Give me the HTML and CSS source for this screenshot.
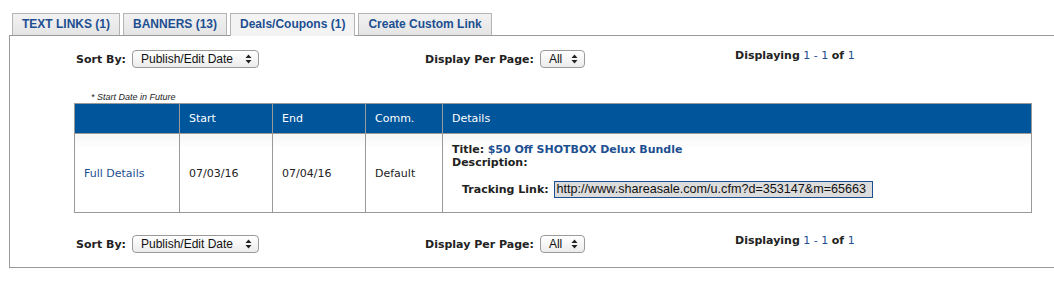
FILE: index.html
```html
<!DOCTYPE html>
<html lang="en">
<head>
    <meta charset="UTF-8">
    <title>Deals/Coupons</title>
    <link rel="stylesheet" href="styles.css">
</head>
<body>

<div class="tabs">
    <a class="tab">TEXT LINKS (1)</a>
    <a class="tab">BANNERS (13)</a>
    <a class="tab active">Deals/Coupons (1)</a>
    <a class="tab">Create Custom Link</a>
</div>

<div class="panel">
    <div class="controls">
        <div class="ctl">
            <span class="label">Sort By:</span>
            <span class="select sort-select">Publish/Edit Date
                <svg class="updown" width="7" height="10" viewBox="0 0 7 10"><path d="M3.5 0.5 L6.5 4 L0.5 4 Z M3.5 9.5 L6.5 6 L0.5 6 Z" fill="#222"/></svg>
            </span>
        </div>
        <div class="ctl">
            <span class="label">Display Per Page:</span>
            <span class="select page-select">All
                <svg class="updown" width="7" height="10" viewBox="0 0 7 10"><path d="M3.5 0.5 L6.5 4 L0.5 4 Z M3.5 9.5 L6.5 6 L0.5 6 Z" fill="#222"/></svg>
            </span>
        </div>
        <div class="count"><b>Displaying</b> <span class="num">1 - 1</span> <b>of</b> <span class="num">1</span></div>
    </div>

    <div class="note">* Start Date in Future</div>

    <table class="deals">
        <tr class="head">
            <th class="c1"></th>
            <th class="c2">Start</th>
            <th class="c3">End</th>
            <th class="c4">Comm.</th>
            <th>Details</th>
        </tr>
        <tr class="row">
            <td><a class="link">Full Details</a></td>
            <td>07/03/16</td>
            <td>07/04/16</td>
            <td>Default</td>
            <td class="details">
                <div><b>Title:</b> <b class="link">$50 Off SHOTBOX Delux Bundle</b></div>
                <div><b>Description:</b></div>
                <div class="track"><b>Tracking Link:</b> <span class="track-input">http://www.shareasale.com/u.cfm?d=353147&amp;m=65663</span></div>
            </td>
        </tr>
    </table>

    <div class="controls bottom">
        <div class="ctl">
            <span class="label">Sort By:</span>
            <span class="select sort-select">Publish/Edit Date
                <svg class="updown" width="7" height="10" viewBox="0 0 7 10"><path d="M3.5 0.5 L6.5 4 L0.5 4 Z M3.5 9.5 L6.5 6 L0.5 6 Z" fill="#222"/></svg>
            </span>
        </div>
        <div class="ctl">
            <span class="label">Display Per Page:</span>
            <span class="select page-select">All
                <svg class="updown" width="7" height="10" viewBox="0 0 7 10"><path d="M3.5 0.5 L6.5 4 L0.5 4 Z M3.5 9.5 L6.5 6 L0.5 6 Z" fill="#222"/></svg>
            </span>
        </div>
        <div class="count"><b>Displaying</b> <span class="num">1 - 1</span> <b>of</b> <span class="num">1</span></div>
    </div>
</div>

</body>
</html>
```

FILE: styles.css
```css
body {
    margin: 0;
    font-family: Verdana, "DejaVu Sans", sans-serif;
    font-size: 11px;
    color: #222;
    background: #fff;
}

/* Tabs */
.tabs {
    display: flex;
    gap: 3px;
    padding: 13px 0 0 12px;
    position: relative;
    z-index: 1;
}

.tab {
    height: 22px;
    line-height: 21px;
    padding: 0 9px;
    border: 1px solid #b4b4b4;
    border-bottom: none;
    box-sizing: border-box;
    background: linear-gradient(#f2f2f2, #e4e4e4);
    font-family: "Liberation Sans", Arial, sans-serif;
    font-weight: bold;
    font-size: 12px;
    color: #1d4f91;
}

.tab.active {
    background: #f3f3f3;
    height: 23px;
    margin-bottom: -1px;
}

/* Panel */
.panel {
    margin-left: 9px;
    border: 1px solid #999;
    border-right: none;
    height: 233px;
    box-sizing: border-box;
}

.controls {
    display: grid;
    grid-template-columns: 349px 310px 1fr;
    padding: 14px 0 0 66px;
    align-items: start;
}

.controls.bottom {
    padding-top: 22px;
}

.ctl {
    display: flex;
    align-items: center;
    gap: 6px;
}

.label {
    font-weight: bold;
}

.select {
    display: inline-flex;
    align-items: center;
    justify-content: space-between;
    height: 18px;
    box-sizing: border-box;
    padding: 0 6px 0 8px;
    border: 1px solid #9a9a9a;
    border-radius: 4px;
    background: linear-gradient(#fff, #ececec);
    font-family: "Liberation Sans", Arial, sans-serif;
    font-size: 12px;
    color: #111;
}

.sort-select {
    width: 127px;
}

.page-select {
    width: 45px;
}

.count {
    margin-top: -1px;
}

.num {
    color: #1d4f91;
}

.note {
    margin: 23px 0 0 81px;
    font-family: "Liberation Sans", Arial, sans-serif;
    font-size: 9px;
    font-style: italic;
    line-height: 12px;
}

/* Table */
.deals {
    margin-left: 64px;
    width: 958px;
    border-collapse: collapse;
}

.deals th,
.deals td {
    border: 1px solid #999;
    text-align: left;
    padding: 0 9px;
}

.deals th {
    background: #00559b;
    color: #fff;
    font-weight: normal;
    height: 29px;
}

.c1 { width: 86px; }
.c2 { width: 74px; }
.c3 { width: 74px; }
.c4 { width: 58px; }

.row td {
    height: 78px;
    background: linear-gradient(#f6f6f6, #fff 14px);
}

.link {
    color: #1d4f91;
}

.deals td.details {
    vertical-align: top;
    height: 69px;
    padding-top: 9px;
    line-height: 13px;
}

.track {
    margin: 12px 0 0 10px;
    display: flex;
    align-items: center;
    gap: 5px;
}

.track-input {
    display: inline-block;
    width: 319px;
    height: 17px;
    box-sizing: border-box;
    line-height: 15px;
    padding-left: 2px;
    border: 1px solid #1d4f91;
    background: #dcdcdc;
    font-family: "Liberation Sans", Arial, sans-serif;
    font-size: 12.6px;
    color: #111;
    white-space: nowrap;
    overflow: hidden;
}
```
